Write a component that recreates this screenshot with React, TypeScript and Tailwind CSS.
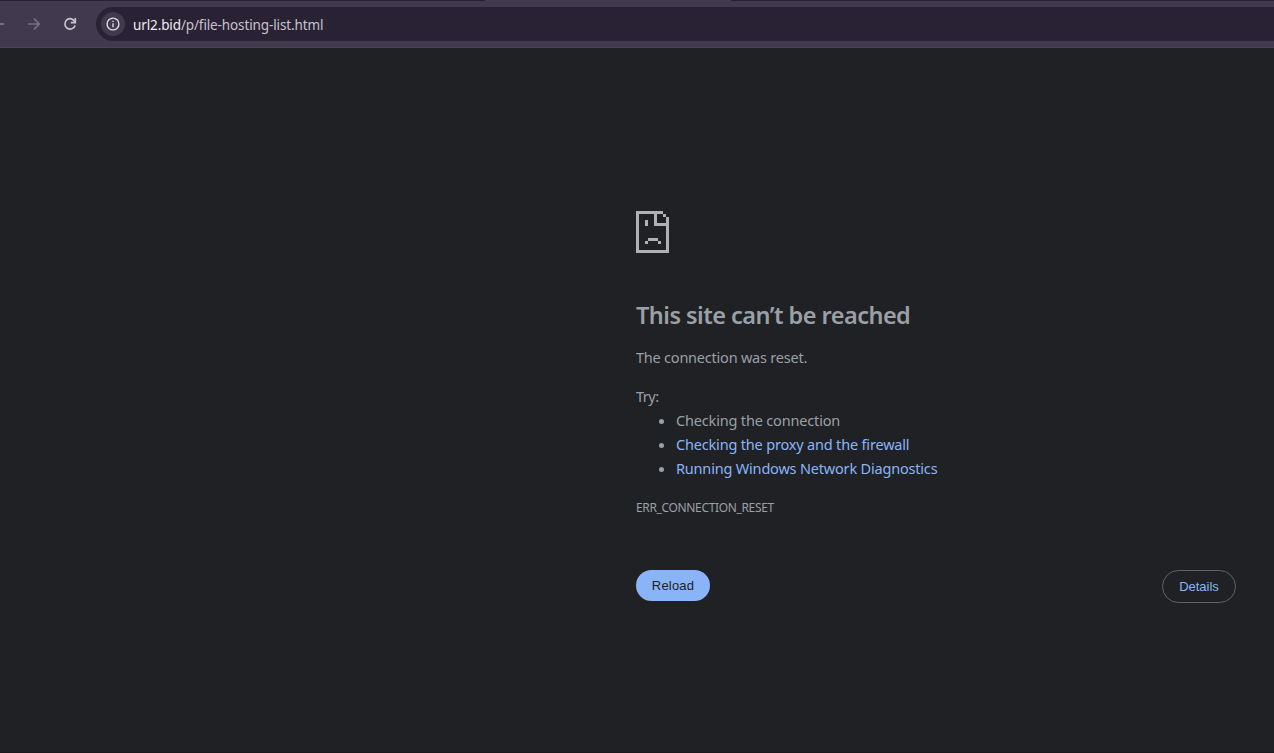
import React from "react";

const suggestions = [
  { text: "Checking the connection", link: false, spacing: "tracking-[-0.17px]" },
  { text: "Checking the proxy and the firewall", link: true, spacing: "tracking-[-0.18px]" },
  { text: "Running Windows Network Diagnostics", link: true, spacing: "tracking-[-0.19px]" },
];

const SadPageIcon = () => (
  <svg width="33" height="42" viewBox="0 0 99 126" fill="#b0b1b3" shapeRendering="crispEdges">
    <path d="M0 0H81V9H63V36H90V18H99V126H0ZM9 9V117H90V45H54V9Z" fillRule="evenodd" />
    <path d="M81 9h9v9h-9zM27 27h9v18h-9zM36 81h30v9h-30zM27 90h9v9h-9zM66 90h9v9h-9z" />
  </svg>
);

const Toolbar = () => (
  <header className="flex h-12 shrink-0 flex-col border-b border-[#4b4456] bg-[#41394d]">
    <div className="flex h-px shrink-0 justify-between">
      <div className="w-[485px] bg-[#292235]" />
      <div className="w-[543px] bg-[#292235]" />
    </div>
    <div className="flex h-[46px] items-center">
      <div className="h-[2px] w-1 bg-[#777080]" />
      <svg className="ml-[22px]" width="16" height="16" viewBox="0 0 16 16" fill="none" stroke="#777080" strokeWidth="1.7">
        <path d="M2 8h11M8 2.7 13.3 8 8 13.3" />
      </svg>
      <svg className="ml-5" width="16" height="16" viewBox="0 0 16 16" fill="none" stroke="#c9c3cf" strokeWidth="1.7">
        <path d="M12.9 5.9A5.2 5.2 0 1 0 13.1 9.4" />
        <path d="M13.3 2v4.6H8.8" />
      </svg>
      <div className="ml-[18px] flex h-[34px] flex-1 items-center rounded-l-full bg-[#292235] pl-[5px]">
        <div className="flex size-6 items-center justify-center rounded-full bg-[#41394d]">
          <svg width="14" height="14" viewBox="0 0 14 14" fill="none" stroke="#ded9e3" strokeWidth="1.4">
            <circle cx="7" cy="7" r="5.9" />
            <path d="M7 6.2v4M7 3.7v1.4" />
          </svg>
        </div>
        <p className="ml-2 whitespace-nowrap pt-px text-[13.5px] leading-5 tracking-[-0.12px] text-[#c7c2cd]">
          <span className="text-[#eeeaf1]">url2.bid</span>/p/file-hosting-list.html
        </p>
      </div>
    </div>
  </header>
);

const App = () => {
  return (
    <div className="flex h-[753px] w-full flex-col overflow-hidden bg-[#202124] font-['Noto_Sans','Open_Sans',sans-serif] text-[#9aa0a6]">
      <Toolbar />
      <main className="ml-[636px] w-[600px] flex-1 pt-[163px] text-[14.5px] leading-6">
        <SadPageIcon />
        <h1 className="mt-12 whitespace-nowrap text-[23.5px] font-semibold leading-[29px] tracking-[-0.53px]">
          This site can’t be reached
        </h1>
        <p className="mt-[15px] tracking-[-0.22px]">The connection was reset.</p>
        <p className="mt-[15px] tracking-[-0.5px]">Try:</p>
        <ul className="list-disc pl-10">
          {suggestions.map((item) => (
            <li key={item.text} className={item.spacing}>
              {item.link ? <a className="text-[#8ab4f8]">{item.text}</a> : item.text}
            </li>
          ))}
        </ul>
        <p className="mt-4 text-[12px] tracking-[-0.35px]">ERR_CONNECTION_RESET</p>
        <div className="mt-[50px] flex items-start justify-between font-['Liberation_Sans',Arial,sans-serif] text-[13px] leading-[15px]">
          <button className="h-[31px] w-[74px] rounded-full bg-[#8ab4f8] tracking-[0.2px] text-[#202124]">
            Reload
          </button>
          <button className="h-[33px] w-[74px] rounded-full border border-[#5f6368] text-[#8ab4f8]">
            Details
          </button>
        </div>
      </main>
      <div className="h-px shrink-0 bg-[#1b191c]" />
    </div>
  );
};

export default App;
